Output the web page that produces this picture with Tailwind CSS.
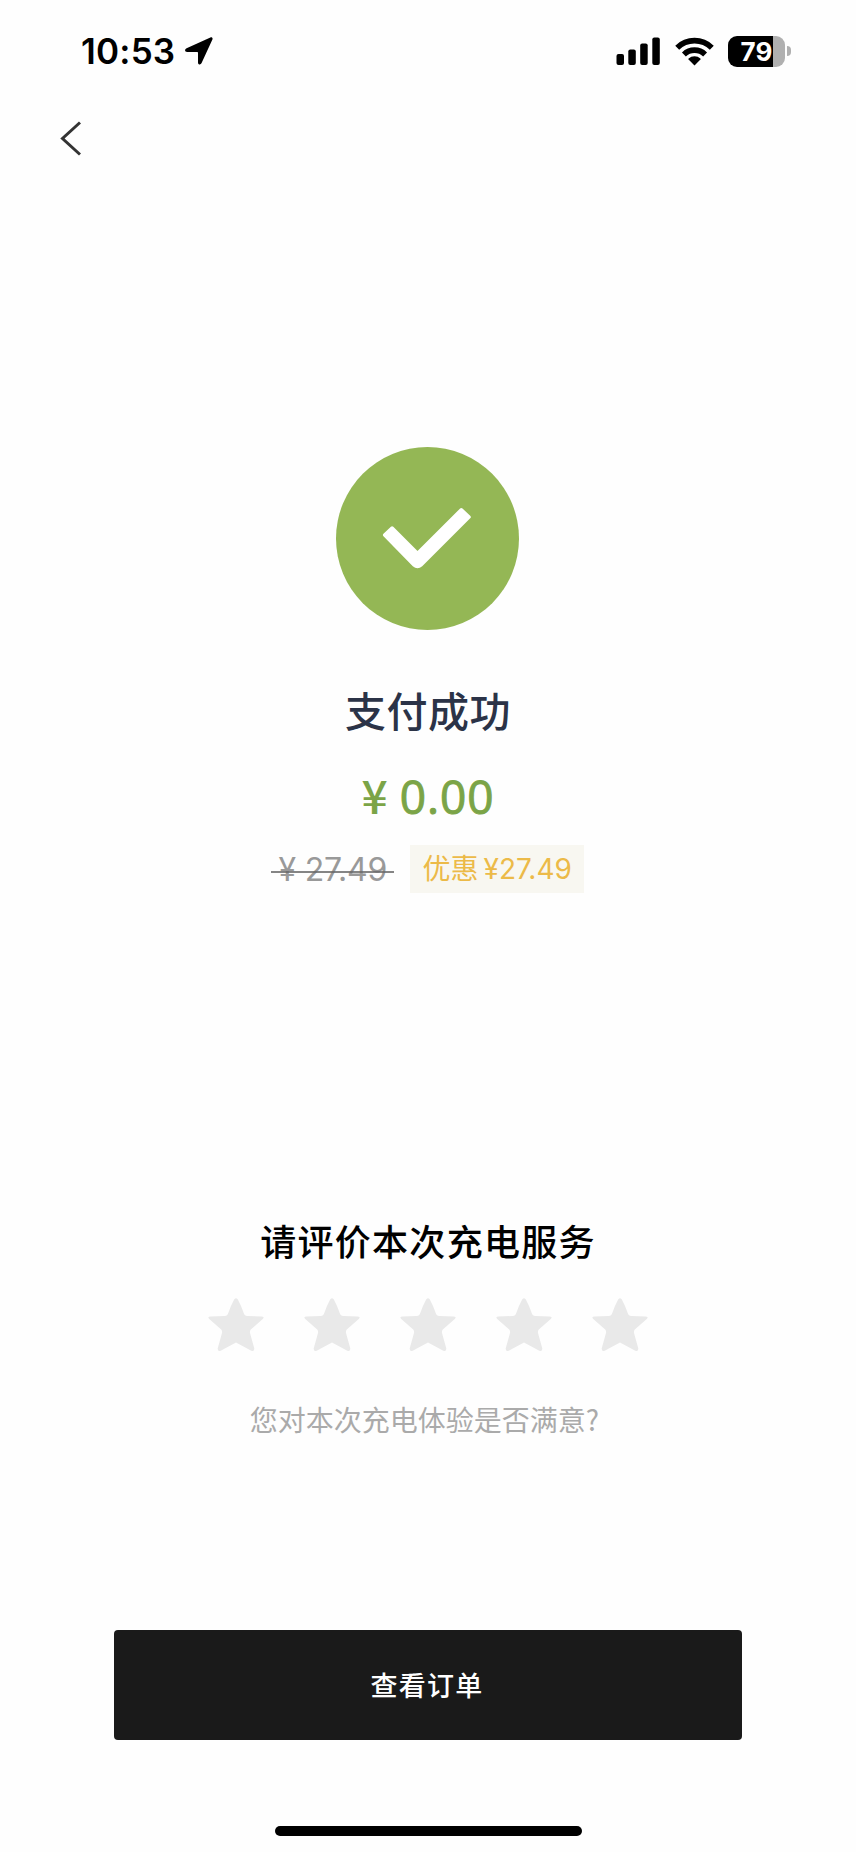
<!DOCTYPE html>
<html lang="zh-CN">

<head>
    <meta charset="UTF-8" />
    <meta name="viewport" content="width=device-width, initial-scale=1.0" />
    <title>支付成功</title>
    <script src="https://cdn.jsdelivr.net/npm/@tailwindcss/browser@4"></script>
</head>

<body class="flex flex-col items-center w-full h-[1852px] overflow-hidden bg-[#fefefe] font-['Noto_Sans_CJK_SC',sans-serif]">
    <!-- Status bar -->
    <header class="flex justify-between w-full h-[102px] pt-[30px] pl-[81px] pr-[65px]">
        <div class="flex items-center gap-[9px] h-[42px]">
            <span class="w-[95px] whitespace-nowrap font-['Inter',sans-serif] text-[35px] leading-[42px] font-semibold tracking-[0.200px] text-black">10:53</span>
            <svg class="w-[28px] h-[28px]" viewBox="0 0 28 28" aria-hidden="true">
                <path d="M25.400.5 1.600 11.300C-.7 12.400-.3 15 2.200 15H12c.7 0 1 .3 1 1v9.400c0 2.500 2.700 2.800 3.600.7L27.400 2.600C28 1 26.900-.1 25.400.5Z" />
            </svg>
        </div>
        <div class="flex items-center h-[42px]">
            <svg class="w-[44px] h-[28px]" viewBox="0 0 44 28" aria-hidden="true">
                <rect x="0.500" y="17" width="7.500" height="11" rx="2" />
                <rect x="12.300" y="12.500" width="7.500" height="15.500" rx="2" />
                <rect x="24.200" y="6.500" width="7.500" height="21.500" rx="2" />
                <rect x="36.300" y="0.500" width="7.500" height="27.500" rx="2" />
            </svg>
            <svg class="ml-[15px] w-[39px] h-[29px]" viewBox="0 0 39 29" aria-hidden="true">
                <g fill="none" stroke="#000" stroke-width="5.600">
                    <path d="M2.200 10.700a24.700 24.700 0 0 1 34.600 0" />
                    <path d="M8.900 17.400a15.300 15.300 0 0 1 21.200 0" />
                </g>
                <path d="M19.500 28.500 13.600 22.600a.8.8 0 0 1 0-1.100 8.600 8.600 0 0 1 11.800 0 .8.8 0 0 1 0 1.100Z" />
            </svg>
            <div class="ml-[14px] flex items-center gap-[2px]">
                <div class="flex justify-center items-center w-[57px] h-[31px] rounded-[9px] bg-linear-to-r from-black from-79% to-[#b0b0b0] to-79%">
                    <span class="font-['Inter',sans-serif] text-[26px] leading-[31px] font-bold text-white">79</span>
                </div>
                <div class="w-[4px] h-[10px] rounded-r-full bg-[#b0b0b0]"></div>
            </div>
        </div>
    </header>

    <nav class="w-full h-[345px] pt-[19px] pl-[59px]">
        <button class="block" aria-label="返回">
            <svg class="w-[22px] h-[35px]" viewBox="0 0 22 35" fill="none" stroke="#333" stroke-width="3" aria-hidden="true">
                <path d="M21 1.500 3.500 17.500 21 33.500" />
            </svg>
        </button>
    </nav>

    <main class="flex flex-col items-center w-full">
        <svg class="mr-[2px] w-[183px] h-[183px]" viewBox="0 0 183 183" aria-hidden="true">
            <circle cx="91.500" cy="91.500" r="91.500" fill="#94b755" />
            <path d="m47.700 86.500 7.200-6.800q1.200-1 2.400 0L81.500 104l42.600-42.500q1.200-1.100 2.400 0l7.700 7.200q1.400 1.300 0 2.600L86.200 119.300q-4.700 4-9.400 0L47.700 89.500q-1.700-1.500 0-3Z" fill="#fff" />
        </svg>

        <h1 class="mt-[49px] text-[41px] leading-[60px] font-medium tracking-[0.500px] text-[#2b3347]">支付成功</h1>
        <p class="flex items-baseline h-[68px] mt-[21px] text-[46px] leading-[68px] font-medium text-[#7ba447]">
            <span>¥</span>
            <span class="ml-[12px] font-['Open_Sans',sans-serif] tracking-[0.900px] [-webkit-text-stroke:1px_#7ba447]">0.00</span>
        </p>

        <div class="mr-[2px] flex items-center gap-[16px] mt-[17px] font-['Inter','Noto_Sans_CJK_SC',sans-serif]">
            <div class="relative w-[123px] h-[48px] pl-[8px] text-[32px] leading-[49px] tracking-[-0.200px] text-[#999] whitespace-nowrap">
                ¥ 27.49
                <span class="absolute left-0 top-[26px] w-full h-[2px] bg-[#666]/80"></span>
            </div>
            <div class="w-[174px] h-[48px] pl-[13px] bg-[#f8f7f1] text-[28px] leading-[48px] text-[#ecba48] whitespace-nowrap"><span>优惠</span><span class="ml-[5px]">¥27.49</span></div>
        </div>

        <section class="flex flex-col items-center mt-[317px]">
            <h2 class="text-[36px] leading-[60px] font-medium tracking-[1.300px] text-black">请评价本次充电服务</h2>
            <div class="flex gap-[40px] mt-[28px]" role="group" aria-label="评分">
                <svg class="w-[56px] h-[54px]" viewBox="0 0 56 54" fill="#e9e9e9" aria-hidden="true"><path id="star" d="M26.300 1.200Q28-.8 29.700 1.200Q33.500 8 36.200 16.300Q37 18 39 18L54 18.400Q57 19 54.500 21.300L42.800 31.500Q41.500 33 42 35L46.300 50.500Q46.400 53.800 43.300 52.800L28 44.400L12.700 52.800Q9.600 53.800 9.700 50.500L14 35Q14.500 33 13.200 31.500L1.500 21.300Q-1 19 2 18.400L17 18Q19 18 19.800 16.300Q22.500 8 26.300 1.200Z" /></svg>
                <svg class="w-[56px] h-[54px]" viewBox="0 0 56 54" fill="#e9e9e9" aria-hidden="true"><use href="#star" /></svg>
                <svg class="w-[56px] h-[54px]" viewBox="0 0 56 54" fill="#e9e9e9" aria-hidden="true"><use href="#star" /></svg>
                <svg class="w-[56px] h-[54px]" viewBox="0 0 56 54" fill="#e9e9e9" aria-hidden="true"><use href="#star" /></svg>
                <svg class="w-[56px] h-[54px]" viewBox="0 0 56 54" fill="#e9e9e9" aria-hidden="true"><use href="#star" /></svg>
            </div>
            <p class="mt-[46px] -ml-[7px] text-[28px] leading-[42px] text-[#aaa]">您对本次充电体验是否满意?</p>
        </section>

        <button class="mt-[190px] w-[628px] h-[110px] pr-[2px] rounded-[4px] bg-[#1a1a1a] text-[27px] leading-[110px] font-medium tracking-[1.300px] text-white">查看订单</button>
    </main>

    <!-- Home indicator -->
    <div class="mt-[86px] w-[307px] h-[10px] rounded-full bg-black"></div>
</body>

</html>
